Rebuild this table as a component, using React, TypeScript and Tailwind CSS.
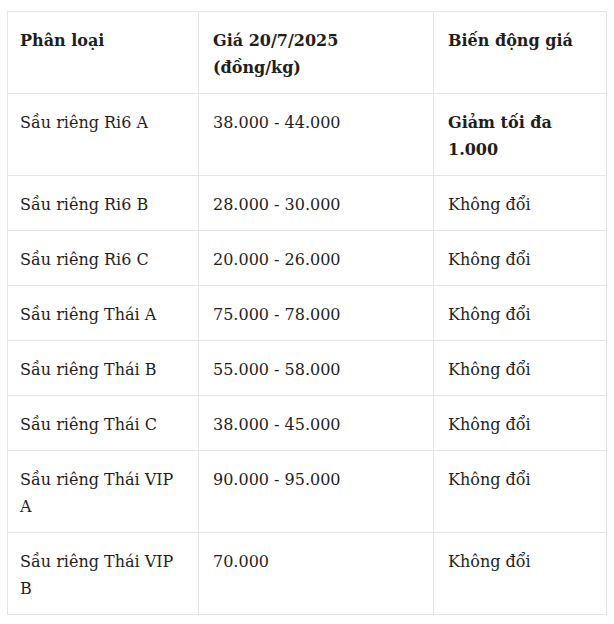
import React from 'react';

interface PriceRow {
    name: React.ReactNode;
    price: string;
    change: React.ReactNode;
    bold?: boolean;
}

const rows: PriceRow[] = [
    { name: 'Sầu riêng Ri6 A', price: '38.000 - 44.000', change: <>Giảm tối đa<br />1.000</>, bold: true },
    { name: 'Sầu riêng Ri6 B', price: '28.000 - 30.000', change: 'Không đổi' },
    { name: 'Sầu riêng Ri6 C', price: '20.000 - 26.000', change: 'Không đổi' },
    { name: 'Sầu riêng Thái A', price: '75.000 - 78.000', change: 'Không đổi' },
    { name: 'Sầu riêng Thái B', price: '55.000 - 58.000', change: 'Không đổi' },
    { name: 'Sầu riêng Thái C', price: '38.000 - 45.000', change: 'Không đổi' },
    { name: <>Sầu riêng Thái VIP<br />A</>, price: '90.000 - 95.000', change: 'Không đổi' },
    { name: <>Sầu riêng Thái VIP<br />B</>, price: '70.000', change: 'Không đổi' },
];

// padding kept so a one-line row is 55px with its border
const cell = 'border border-[#e5e5e5] pr-[14px] pt-[15px] pb-[12px] align-top text-left';
const first = `${cell} pl-[12px]`;
const other = `${cell} pl-[14px]`;

export default function App() {
    return (
        <div className="min-h-[624px] w-[614px] bg-white pt-[11px] pl-[7px] font-['DejaVu_Serif',serif] text-[16px] leading-[27px] text-[#1e1e1e]">
            <table className="w-[599px] table-fixed border-collapse">
                <colgroup>
                    <col className="w-[191px]" />
                    <col className="w-[235px]" />
                    <col className="w-[173px]" />
                </colgroup>
                <thead>
                    <tr>
                        <th className={`${first} font-bold`}>Phân loại</th>
                        <th className={`${other} font-bold`}>Giá 20/7/2025<br />(đồng/kg)</th>
                        <th className={`${other} font-bold`}>Biến động giá</th>
                    </tr>
                </thead>
                <tbody>
                    {rows.map((r, i) => (
                        <tr key={i}>
                            <td className={first}>{r.name}</td>
                            <td className={other}>{r.price}</td>
                            <td className={`${other} ${r.bold ? 'font-bold' : ''}`}>{r.change}</td>
                        </tr>
                    ))}
                </tbody>
            </table>
        </div>
    );
}
